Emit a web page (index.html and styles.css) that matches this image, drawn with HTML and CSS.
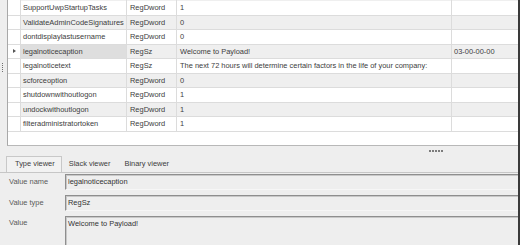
FILE: index.html
```html
<!DOCTYPE html>
<html>
<head>
<meta charset="utf-8">
<link rel="stylesheet" href="styles.css">
</head>
<body>
<div class="app">
  <div class="top">
    <div class="vsplit"><span class="vgrip"></span></div>
    <div class="grid">
      <div class="row partial"><div class="hdr"></div><div class="c"></div><div class="c"></div><div class="c"></div><div class="c"></div></div>
      <div class="row"><div class="hdr"></div><div class="c">SupportUwpStartupTasks</div><div class="c">RegDword</div><div class="c">1</div><div class="c"></div></div>
      <div class="row alt"><div class="hdr"></div><div class="c">ValidateAdminCodeSignatures</div><div class="c">RegDword</div><div class="c">0</div><div class="c"></div></div>
      <div class="row"><div class="hdr"></div><div class="c">dontdisplaylastusername</div><div class="c">RegDword</div><div class="c">0</div><div class="c"></div></div>
      <div class="row alt sel"><div class="hdr"><span class="arrow"></span></div><div class="c focus">legalnoticecaption</div><div class="c">RegSz</div><div class="c">Welcome to Payload!</div><div class="c">03-00-00-00</div></div>
      <div class="row"><div class="hdr"></div><div class="c">legalnoticetext</div><div class="c">RegSz</div><div class="c">The next 72 hours will determine certain factors in the life of your company:</div><div class="c"></div></div>
      <div class="row alt"><div class="hdr"></div><div class="c">scforceoption</div><div class="c">RegDword</div><div class="c">0</div><div class="c"></div></div>
      <div class="row"><div class="hdr"></div><div class="c">shutdownwithoutlogon</div><div class="c">RegDword</div><div class="c">1</div><div class="c"></div></div>
      <div class="row alt"><div class="hdr"></div><div class="c">undockwithoutlogon</div><div class="c">RegDword</div><div class="c">1</div><div class="c"></div></div>
      <div class="row"><div class="hdr"></div><div class="c">filteradministratortoken</div><div class="c">RegDword</div><div class="c">1</div><div class="c"></div></div>
    </div>
  </div>
  <div class="bottom">
    <div class="hgrip-row"><span class="hgrip"></span></div>
    <div class="tabs">
      <div class="tab active">Type viewer</div>
      <div class="tab">Slack viewer</div>
      <div class="tab">Binary viewer</div>
    </div>
    <div class="page">
      <div class="label">Value name</div>
      <div class="box">legalnoticecaption</div>
      <div class="label">Value type</div>
      <div class="box">RegSz</div>
      <div class="label top">Value</div>
      <div class="box tall">Welcome to Payload!</div>
    </div>
  </div>
</div>
</body>
</html>
```

FILE: styles.css
```css
* { box-sizing: border-box; }
html, body {
  margin: 0;
  padding: 0;
}
body {
  width: 520px;
  height: 245px;
  overflow: hidden;
  background: #eeeeee;
  font-family: "Liberation Sans", Arial, sans-serif;
  font-size: 7.45px;
  color: #3d3d3d;
}
.app {
  width: 520px;
  height: 245px;
  display: flex;
  flex-direction: column;
  border-right: 2px solid #3a3a3a;
  overflow: hidden;
}
.top {
  height: 146px;
  display: flex;
  flex: none;
}
.vsplit {
  width: 7px;
  flex: none;
  display: flex;
  align-items: flex-start;
  padding-top: 63px;
  padding-left: 2px;
}
.vgrip {
  display: block;
  width: 1px;
  height: 10px;
  background: repeating-linear-gradient(to bottom, #6e6e6e 0 1px, transparent 1px 2px);
}
.grid {
  flex: 1;
  background: #ffffff;
  border-left: 1px solid #a8a8a8;
  border-bottom: 1px solid #b8b8b8;
  display: flex;
  flex-direction: column;
  overflow: hidden;
}
.row {
  display: grid;
  grid-template-columns: 13px 106px 50px 275px 1fr;
  height: 14.5px;
  flex: none;
  border-bottom: 1px solid #dcdcdc;
  background: #ffffff;
}
.row.alt { background: #efefef; }
.row.partial {
  height: 1px;
  border-bottom: none;
  background: #efefef;
}
.hdr {
  border-right: 1px solid #dcdcdc;
  background: #ffffff;
  display: flex;
  align-items: center;
  justify-content: center;
}
.c {
  border-right: 1px solid #dcdcdc;
  padding-left: 3px;
  white-space: nowrap;
  overflow: hidden;
  line-height: 13.5px;
}
.c:nth-child(2) { padding-left: 2px; }
.c:last-child { border-right: none; padding-left: 2px; }
.c.focus { background: #dedede; }
.arrow {
  width: 0;
  height: 0;
  border-top: 2.5px solid transparent;
  border-bottom: 2.5px solid transparent;
  border-left: 3px solid #555555;
  margin-left: 1px;
}
.bottom {
  flex: 1;
  display: flex;
  flex-direction: column;
  min-height: 0;
  overflow: hidden;
}
.hgrip-row {
  height: 10px;
  padding-top: 4px;
  padding-left: 429px;
  flex: none;
}
.hgrip {
  display: block;
  width: 14px;
  height: 2px;
  background: repeating-linear-gradient(to right, #7c7c7c 0 2px, transparent 2px 3px);
}
.tabs {
  height: 16px;
  display: flex;
  padding-left: 6px;
  flex: none;
}
.tab {
  padding: 0 7px 0 7px;
  line-height: 15px;
  white-space: nowrap;
  color: #3d3d3d;
}
.tab.active {
  border: 1px solid #c8c8c8;
  border-bottom: none;
  background: #f2f2f2;
  padding: 0 6px 0 8px;
  line-height: 14px;
}
.page {
  flex: 1;
  border-top: 1px solid #c6c6c6;
  padding: 1px 0 0 9px;
  display: grid;
  grid-template-columns: 56px 1fr;
  grid-template-rows: 16px 16px 1fr;
  row-gap: 5px;
  min-height: 0;
}
.label {
  color: #5a5a5a;
  line-height: 16px;
  white-space: nowrap;
}
.label.top { line-height: 13px; }
.box {
  border-top: 1px solid #8e8e8e;
  border-left: 1px solid #8e8e8e;
  border-bottom: 1px solid #f6f6f6;
  box-shadow: inset 1px 1px 0 #c8c8c8;
  background: #eeeeee;
  padding-left: 2px;
  line-height: 14px;
  color: #333333;
  white-space: nowrap;
}
.box.tall {
  border-bottom: none;
  line-height: 12px;
  padding-top: 1px;
}
```
